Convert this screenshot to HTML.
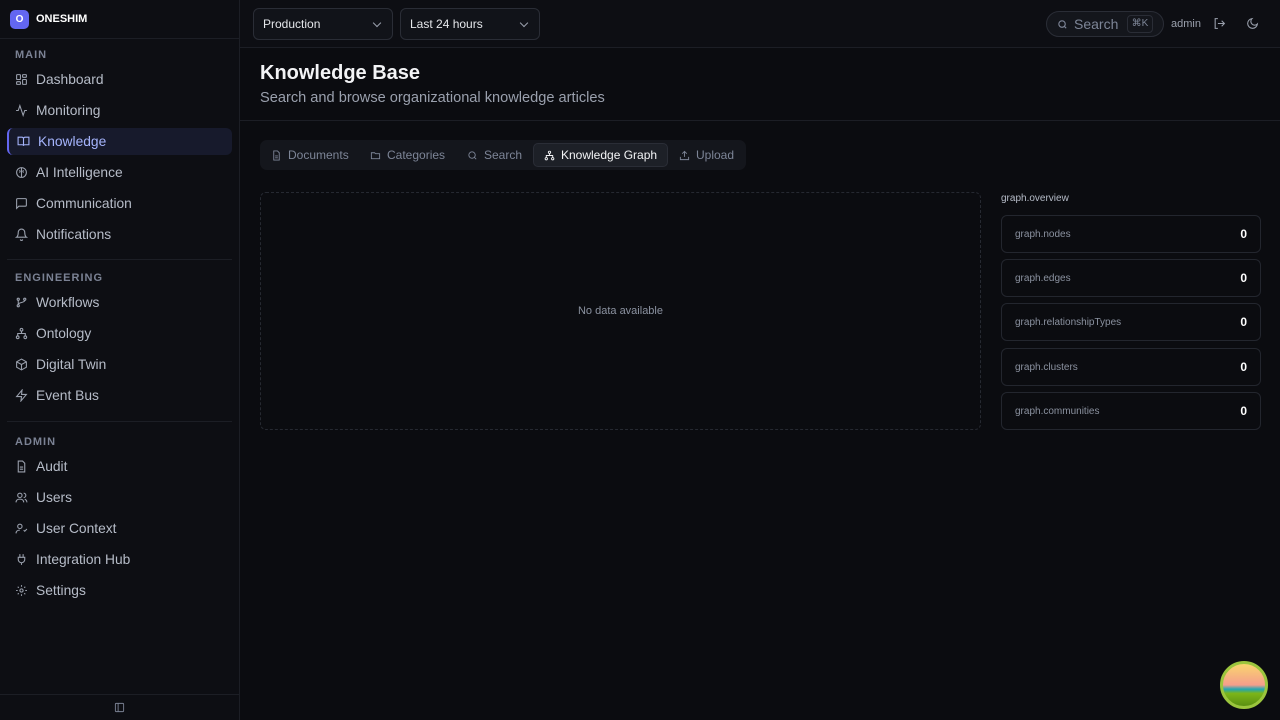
<!DOCTYPE html>
<html><head><meta charset="utf-8"><style>
*{box-sizing:border-box;margin:0;padding:0}
body{width:1280px;height:720px;background:#0b0c10;font-family:"Liberation Sans",sans-serif;color:#e5e7eb;position:relative;overflow:hidden}
.sb{position:absolute;left:0;top:0;width:240px;height:720px;background:#0d0e13;border-right:1px solid #1c1e25}
.logo{height:39px;border-bottom:1px solid #1c1e25;display:flex;align-items:center;padding-left:10px}
.logo .b{width:19px;height:19px;background:#6366f1;border-radius:5px;color:#fff;font-size:10px;font-weight:bold;display:flex;align-items:center;justify-content:center}
.logo span{margin-left:7px;font-size:11px;font-weight:bold;color:#fff}
.sec{font-size:11px;font-weight:bold;letter-spacing:1px;color:#7b8294;padding-left:15px;height:14px;line-height:14px}
.it{height:27px;margin:0 7px 4px 7px;display:flex;align-items:center;padding-left:8px;font-size:13.8px;color:#b6bcc8;border-radius:6px}
.it svg{width:13px;height:13px;margin-right:8px;stroke:#9aa0ad;fill:none;stroke-width:2}
.it.a{background:#171a2c;color:#a5b4fc;border-left:2px solid #6366f1;padding-left:8px}
.it.a svg{stroke:#a5b4fc}
.hr{height:1px;background:#1c1e25;margin:0 7px}
.top{position:absolute;left:240px;top:0;right:0;height:48px;border-bottom:1px solid #1c1e25;background:#0d0e13}
.sel{position:absolute;top:8px;height:32px;border:1px solid #2a2d36;border-radius:6px;background:#111319;font-size:12px;color:#e5e7eb;padding-left:9px;line-height:30px}
.sel:after{content:"";position:absolute;right:12px;top:11px;width:5px;height:5px;border-right:1.5px solid #9aa0ad;border-bottom:1.5px solid #9aa0ad;transform:rotate(45deg)}
.hd{position:absolute;left:240px;top:48px;right:0;height:73px;border-bottom:1px solid #1c1e25}
.tabs{position:absolute;left:260px;top:140px;width:486px;height:30px;background:#14161c;border-radius:7px}
.tab{position:absolute;top:3px;height:24px;font-size:12px;color:#7d8597;line-height:24px;display:flex;align-items:center}
.tab svg{width:11px;height:11px;margin-right:6px;stroke:currentColor;fill:none;stroke-width:2}
.tab.a{background:#1d2027;border:1px solid #2a2d36;border-radius:5px;color:#f3f4f6;padding:0 10px}
.gbox{position:absolute;left:260px;top:192px;width:721px;height:238px;border:1px dashed #262931;border-radius:6px;font-size:11px;color:#8b92a0;display:flex;align-items:center;justify-content:center}
.st{position:absolute;left:1001px;width:260px;height:38px;border:1px solid #23262e;border-radius:6px;font-size:10px;color:#8b92a0;display:flex;align-items:center;justify-content:space-between;padding:0 13px}
.st b{color:#fff;font-size:12px}
</style></head><body>
<div class="sb">
<div class="logo"><div class="b">O</div><span>ONESHIM</span></div>
<div style="height:9px"></div>
<div class="sec">MAIN</div><div style="height:4px"></div>
<div class="it"><svg viewBox="0 0 24 24"><rect x="3" y="3" width="7" height="9" rx="1"/><rect x="14" y="3" width="7" height="5" rx="1"/><rect x="14" y="12" width="7" height="9" rx="1"/><rect x="3" y="16" width="7" height="5" rx="1"/></svg>Dashboard</div>
<div class="it"><svg viewBox="0 0 24 24"><path d="M22 12h-4l-3 9L9 3l-3 9H2"/></svg>Monitoring</div>
<div class="it a"><svg viewBox="0 0 24 24"><path d="M2 4h7a3 3 0 0 1 3 3v13a2 2 0 0 0-2-2H2zM22 4h-7a3 3 0 0 0-3 3v13a2 2 0 0 1 2-2h8z"/></svg>Knowledge</div>
<div class="it"><svg viewBox="0 0 24 24"><circle cx="12" cy="12" r="9"/><path d="M12 3v18M8 8c2 1 2 3 0 4M16 8c-2 1-2 3 0 4"/></svg>AI Intelligence</div>
<div class="it"><svg viewBox="0 0 24 24"><path d="M21 15a2 2 0 0 1-2 2H7l-4 4V5a2 2 0 0 1 2-2h14a2 2 0 0 1 2 2z"/></svg>Communication</div>
<div class="it"><svg viewBox="0 0 24 24"><path d="M6 8a6 6 0 0 1 12 0c0 7 3 9 3 9H3s3-2 3-9M10 21a2 2 0 0 0 4 0"/></svg>Notifications</div>
<div style="height:7px"></div><div class="hr"></div><div style="height:11px"></div>
<div class="sec">ENGINEERING</div><div style="height:4px"></div>
<div class="it"><svg viewBox="0 0 24 24"><circle cx="6" cy="6" r="2"/><circle cx="6" cy="18" r="2"/><circle cx="18" cy="6" r="2"/><path d="M6 8v8M18 8c0 5-12 3-12 8"/></svg>Workflows</div>
<div class="it"><svg viewBox="0 0 24 24"><circle cx="12" cy="5" r="2.5"/><circle cx="5" cy="19" r="2.5"/><circle cx="19" cy="19" r="2.5"/><path d="M12 8v4M5 16v-4h14v4"/></svg>Ontology</div>
<div class="it"><svg viewBox="0 0 24 24"><path d="M12 2l9 5v10l-9 5-9-5V7zM3 7l9 5 9-5M12 12v10"/></svg>Digital Twin</div>
<div class="it"><svg viewBox="0 0 24 24"><path d="M13 2L3 14h9l-1 8 10-12h-9z"/></svg>Event Bus</div>
<div style="height:8px"></div><div class="hr"></div><div style="height:13px"></div>
<div class="sec">ADMIN</div><div style="height:4px"></div>
<div class="it"><svg viewBox="0 0 24 24"><path d="M14 2H6v20h12V6zM9 13h6M9 17h6"/></svg>Audit</div>
<div class="it"><svg viewBox="0 0 24 24"><circle cx="9" cy="8" r="4"/><path d="M2 21c0-4 3-6 7-6s7 2 7 6M16 4a4 4 0 0 1 0 8M22 21c0-3-2-5-4-6"/></svg>Users</div>
<div class="it"><svg viewBox="0 0 24 24"><circle cx="9" cy="8" r="4"/><path d="M2 21c0-4 3-6 7-6M16 15l2 2 4-4"/></svg>User Context</div>
<div class="it"><svg viewBox="0 0 24 24"><path d="M9 2v6M15 2v6M6 8h12v4a6 6 0 0 1-12 0zM12 18v4"/></svg>Integration Hub</div>
<div class="it"><svg viewBox="0 0 24 24"><circle cx="12" cy="12" r="3"/><path d="M12 2v3M12 19v3M2 12h3M19 12h3M5 5l2 2M17 17l2 2M5 19l2-2M17 7l2-2"/></svg>Settings</div>
<div style="position:absolute;left:0;right:0;top:694px;height:1px;background:#1c1e25"></div>
<svg style="position:absolute;left:114px;top:702px" width="11" height="11" viewBox="0 0 24 24" fill="none" stroke="#7b8294" stroke-width="2"><rect x="3" y="3" width="18" height="18" rx="2"/><path d="M9 3v18"/></svg>
</div>
<div class="top">
<div class="sel" style="left:13px;width:140px">Production</div>
<div class="sel" style="left:160px;width:140px">Last 24 hours</div>
<div style="position:absolute;left:806px;top:11px;width:118px;height:26px;border:1px solid #2a2d36;border-radius:13px;background:#14161c;font-size:14px;color:#7d8597;line-height:24px;padding-left:27px">Search
<svg style="position:absolute;left:10px;top:7px" width="11" height="11" viewBox="0 0 24 24" fill="none" stroke="#7d8597" stroke-width="2.5"><circle cx="11" cy="11" r="7"/><path d="M20 20l-4-4"/></svg>
<span style="position:absolute;left:80px;top:3px;width:26px;height:18px;border:1px solid #2a2d36;border-radius:4px;font-size:10px;line-height:16px;text-align:center">⌘K</span></div>
<div style="position:absolute;left:931px;top:18px;font-size:11px;color:#9aa0ad">admin</div>
<svg style="position:absolute;left:973px;top:17px" width="13" height="13" viewBox="0 0 24 24" fill="none" stroke="#9aa0ad" stroke-width="2"><path d="M9 3H4v18h5M16 17l5-5-5-5M21 12H9"/></svg>
<svg style="position:absolute;left:1006px;top:17px" width="13" height="13" viewBox="0 0 24 24" fill="none" stroke="#9aa0ad" stroke-width="2"><path d="M21 13A9 9 0 1 1 11 3a7 7 0 0 0 10 10z"/></svg>
</div>
<div class="hd">
<div style="position:absolute;left:20px;top:14px;font-size:20px;font-weight:bold;color:#f3f4f6">Knowledge Base</div>
<div style="position:absolute;left:20px;top:42px;font-size:14.6px;color:#9aa0ad">Search and browse organizational knowledge articles</div>
</div>
<div class="tabs">
<div class="tab" style="left:11px"><svg viewBox="0 0 24 24"><path d="M14 2H6v20h12V6zM9 13h6M9 17h6"/></svg>Documents</div>
<div class="tab" style="left:110px"><svg viewBox="0 0 24 24"><path d="M3 6h7l2 2h9v11H3z"/></svg>Categories</div>
<div class="tab" style="left:207px"><svg viewBox="0 0 24 24"><circle cx="11" cy="11" r="7"/><path d="M20 20l-4-4"/></svg>Search</div>
<div class="tab a" style="left:273px"><svg viewBox="0 0 24 24"><circle cx="12" cy="5" r="2.5"/><circle cx="5" cy="19" r="2.5"/><circle cx="19" cy="19" r="2.5"/><path d="M12 8v4M5 16v-4h14v4"/></svg>Knowledge Graph</div>
<div class="tab" style="left:419px"><svg viewBox="0 0 24 24"><path d="M12 15V3M7 8l5-5 5 5M3 15v6h18v-6"/></svg>Upload</div>
</div>
<div class="gbox">No data available</div>
<div style="position:absolute;left:1001px;top:193px;font-size:10px;color:#b6bcc8">graph.overview</div>
<div class="st" style="top:215px">graph.nodes<b>0</b></div>
<div class="st" style="top:259px">graph.edges<b>0</b></div>
<div class="st" style="top:303px">graph.relationshipTypes<b>0</b></div>
<div class="st" style="top:348px">graph.clusters<b>0</b></div>
<div class="st" style="top:392px">graph.communities<b>0</b></div>
<div style="position:absolute;left:1220px;top:661px;width:48px;height:48px;border-radius:50%;border:3px solid #9bc53d;background:linear-gradient(#f9d56e 0%,#f59e8b 50%,#22a6b3 60%,#7cb518 70%,#5a8f12 100%)"></div>
</body></html>
